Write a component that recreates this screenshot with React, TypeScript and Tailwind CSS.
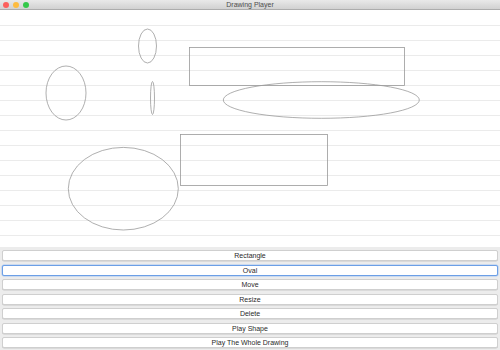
import React from "react";

const buttons = ["Rectangle", "Oval", "Move", "Resize", "Delete", "Play Shape", "Play The Whole Drawing"];

// guide lines every 15px on the canvas
const lines = Array.from({ length: 15 }, (_, i) => 15 + i * 15);

export default function App() {
  return (
    <div className="w-[500px] h-[350px] flex flex-col bg-white overflow-hidden" style={{ fontFamily: '"Liberation Sans", "DejaVu Sans", sans-serif' }}>
      {/* Title bar */}
      <div className="relative h-[10px] shrink-0 bg-gradient-to-b from-[#e9e9e9] to-[#d1d1d1] border-b border-[#acacac] flex items-center justify-center">
        <div className="absolute left-[3px] top-[2px] flex gap-[4px]">
          <span className="w-[6px] h-[6px] rounded-full bg-[#fc605c]" />
          <span className="w-[6px] h-[6px] rounded-full bg-[#fdbc40]" />
          <span className="w-[6px] h-[6px] rounded-full bg-[#34c84a]" />
        </div>
        <span className="text-[7px] leading-none text-[#4d4d4d]">Drawing Player</span>
      </div>

      {/* Canvas */}
      <div className="h-[237px] shrink-0 bg-white">
        <svg width="500" height="237" viewBox="0 0 500 237">
          {lines.map((y) => (
            <line key={y} x1="0" x2="500" y1={y + 0.5} y2={y + 0.5} stroke="#ebebeb" strokeWidth="1" />
          ))}
          <g fill="none" stroke="#9a9a9a" strokeWidth="0.8">
            <ellipse cx="147.5" cy="36" rx="9" ry="17" />
            <ellipse cx="152.5" cy="88" rx="2" ry="16.5" />
            <ellipse cx="66" cy="83" rx="20" ry="27" />
            <rect x="189.5" y="37.5" width="215" height="38" />
            <ellipse cx="321.3" cy="90" rx="98" ry="18.3" />
            <rect x="180.5" y="124.5" width="147" height="51" />
            <ellipse cx="123.3" cy="178.7" rx="55" ry="41.3" />
          </g>
        </svg>
      </div>

      {/* Button panel */}
      <div className="flex-1 bg-[#ececec] px-[2px] pt-[3px] flex flex-col gap-[3.5px]">
        {buttons.map((b) => (
          <button
            key={b}
            className={
              "h-[11px] w-full rounded-[2px] bg-white text-[7px] leading-none text-[#2a2a2a] flex items-center justify-center " +
              (b === "Oval"
                ? "border border-[#6c9fe6] shadow-[0_0_0_0.5px_#a9c8f2]"
                : "border border-[#cfcfcf] shadow-[0_0.5px_0.5px_rgba(0,0,0,0.15)]")
            }
          >
            {b}
          </button>
        ))}
      </div>
    </div>
  );
}
